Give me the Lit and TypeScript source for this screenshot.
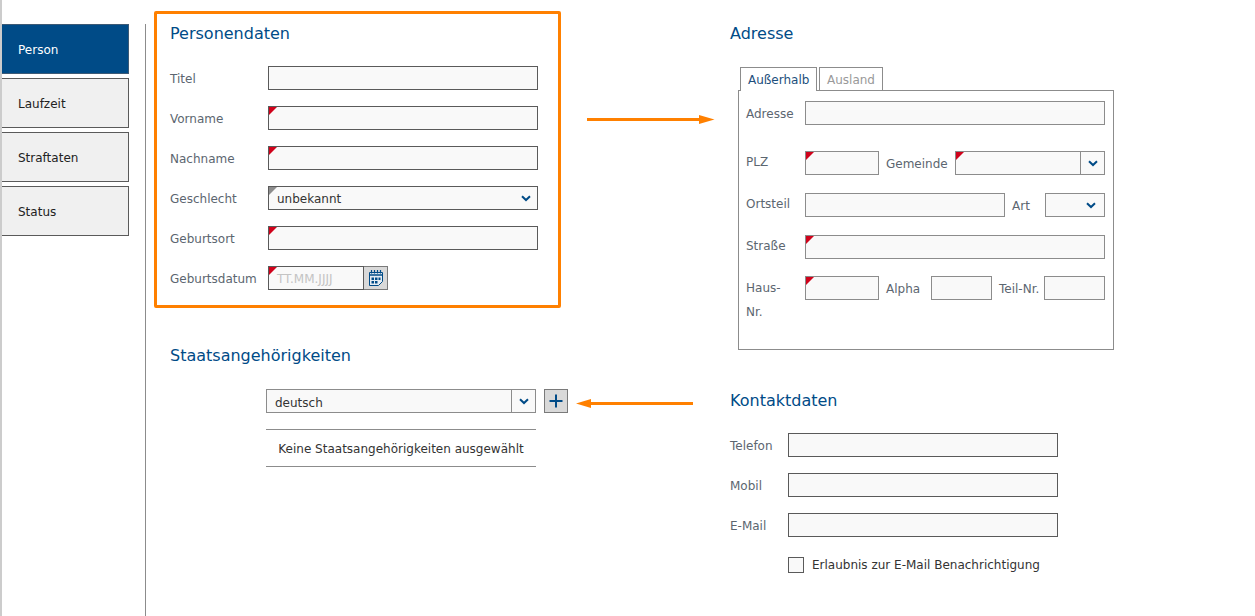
import { LitElement, html, css } from "lit";
import { customElement } from "lit/decorators.js";

const chevron = html`<svg class="chev" width="10" height="7" viewBox="0 0 10 7"><path d="M1 1.2 L5 5 L9 1.2" fill="none" stroke="#004b87" stroke-width="2"/></svg>`;

@customElement("app-root")
export class AppRoot extends LitElement {
  static styles = css`
    :host { display: block; width: 1255px; height: 616px; position: relative; overflow: hidden; background: #fff;
      font-family: "DejaVu Sans", sans-serif; font-size: 12px; color: #333; }
    * { box-sizing: border-box; }
    .page { display: flex; height: 616px; }
    .strip { width: 2px; background: #ccc; flex: none; }
    .side { width: 127px; flex: none; padding-top: 24px; display: flex; flex-direction: column; gap: 4px; }
    .tab { height: 50px; border: 1px solid #5a5a5a; border-left: 0; background: #f0f0f0; color: #222; padding: 2px 0 0 16px;
      display: flex; align-items: center; }
    .tab.on { background: #004b87; color: #fff; border-color: #3d5a75; }
    .rule { width: 1px; background: #8c8c8c; margin: 24px 0 0 16px; flex: none; }
    .left { width: 407px; margin-left: 8px; flex: none; padding-top: 11px; }
    .right { width: 384px; margin-left: 169px; flex: none; }
    h2 { margin: 0; font-size: 16px; font-weight: 400; color: #004b87; line-height: 20px; }
    .box { height: 297px; border: 3px solid #ff8000; border-radius: 2px; padding: 10px 13px 0; }
    .box h2 { margin-bottom: 22px; }
    .row { display: flex; align-items: flex-start; height: 24px; margin-bottom: 16px; }
    .lbl { color: #5c6670; flex: none; line-height: 26px; height: 24px; }
    .box .lbl { width: 98px; }
    .in { height: 24px; border: 1px solid #5a5a5a; background: #f9f9f9; position: relative; flex: none;
      display: flex; align-items: center; color: #333; }
    .w270 { width: 270px; }
    .req::before { content: ""; position: absolute; left: 0; top: 0; border-style: solid; border-width: 8px 8px 0 0;
      border-color: #d0021b transparent transparent transparent; }
    .req.grey::before { border-top-color: #8c8c8c; }
    .val { padding: 2px 0 0 8px; }
    .sel { justify-content: space-between; padding-right: 6px; }
    .sel.art-sel { padding-right: 8px; }
    .ph { color: #c4c4c4; padding: 2px 0 0 8px; }
    .date { width: 96px; }
    .cal { width: 24px; height: 24px; border: 1px solid #7a7a7a; border-left: 0; background: #d9d9d9; display: flex;
      align-items: center; justify-content: center; flex: none; }
    .staat { padding: 0 0 0 16px; margin-top: 38px; }
    .combo { margin: 23px 0 0 112px; display: flex; gap: 8px; }
    .lt { border-color: #8c8c8c; }
    .grow { flex: 1; }
    .combo .val { padding-top: 4px; }
    .drop { width: 24px; height: 22px; border-left: 1px solid #8c8c8c; display: flex; align-items: center; justify-content: center; flex: none; }
    .plus { width: 24px; height: 24px; border: 1px solid #7a7a7a; background: #d9d9d9; display: flex; align-items: center; justify-content: center; flex: none; }
    .list { margin: 16px 0 0 112px; width: 270px; height: 38px; padding-top: 2px; border-top: 1px solid #8c8c8c; border-bottom: 1px solid #8c8c8c;
      display: flex; align-items: center; justify-content: center; color: #333; }
    .right > h2 { margin-top: 24px; }
    .tabs { display: flex; gap: 2px; margin: 23px 0 0 10px; height: 23px; position: relative; z-index: 1; }
    .t { height: 23px; border: 1px solid #8c8c8c; border-bottom: 0; padding: 2px 7px 0; display: flex; align-items: center; color: #999; background: #fff; }
    .t.on { height: 24px; padding-top: 1px; color: #1d4f7c; width: 77px; }
    .t.off { width: 64px; }
    .frame { width: 376px; height: 260px; margin: 0 0 0 8px; border: 1px solid #8c8c8c; padding: 10px 8px 0 7px; }
    .fr { display: flex; height: 24px; }
    .fr > .flbl { width: 59px; flex: none; color: #5c6670; line-height: 24px; }
    .fr .mid { color: #5c6670; flex: none; padding-top: 1px; display: flex; align-items: center; height: 24px; }
    .fr.up > .flbl { margin-top: -1px; }
    .fr.first > .flbl { margin-top: 1px; }
    .fr.haus > .flbl { margin-top: 0; }
    .grow2 { width: 300px; }
    .w74 { width: 74px; }
    .w150 { width: 150px; }
    .w200 { width: 200px; }
    .w60 { width: 60px; }
    .w61 { width: 61px; }
    .ml7 { margin-left: 7px; }
    .gem { width: 69px; }
    .art { width: 33px; }
    .alpha { width: 45px; }
    .teil { width: 45px; }
    .m26 { margin-top: 26px; }
    .m18 { margin-top: 18px; }
    .m17 { margin-top: 17px; }
    .right > h2.kh { margin-top: 41px; }
    .kontakt { margin-top: 22px; }
    .kontakt .lbl { width: 58px; }
    .check { display: flex; align-items: center; margin: 20px 0 0 58px; height: 16px; gap: 8px; color: #333; }
    .cb { width: 16px; height: 16px; border: 1px solid #5a5a5a; background: #f9f9f9; flex: none; }
    .arrows { position: absolute; inset: 0; pointer-events: none; }
  `;

  private calIcon() {
    return html`<svg width="14" height="16" viewBox="0 0 14 16">
      <path d="M0.5 2.5 H13.5 V11.5 L9.5 15.5 H0.5 Z" fill="#e4ecf3" stroke="#004b87" stroke-width="1"/>
      <path d="M0.5 5 H13.5" stroke="#004b87" stroke-width="1.5"/>
      <path d="M2.5 0 V3.5 M5.5 0 V3.5 M8.5 0 V3.5 M11.5 0 V3.5" stroke="#004b87" stroke-width="1.2"/>
      <rect x="2.5" y="7.5" width="2.5" height="2.5" fill="#004b87"/><rect x="6" y="7.5" width="2.5" height="2.5" fill="#004b87"/><rect x="9.5" y="7.5" width="2" height="2.5" fill="#004b87"/>
      <rect x="2.5" y="11" width="2.5" height="2.5" fill="#004b87"/><rect x="6" y="11" width="2.5" height="2.5" fill="#004b87"/>
    </svg>`;
  }

  render() {
    return html`
      <div class="page">
        <div class="strip"></div>
        <nav class="side">
          <div class="tab on">Person</div>
          <div class="tab">Laufzeit</div>
          <div class="tab">Straftaten</div>
          <div class="tab">Status</div>
        </nav>
        <div class="rule"></div>
        <div class="left">
          <section class="box">
            <h2>Personendaten</h2>
            <div class="row"><span class="lbl">Titel</span><div class="in w270"></div></div>
            <div class="row"><span class="lbl">Vorname</span><div class="in w270 req"></div></div>
            <div class="row"><span class="lbl">Nachname</span><div class="in w270 req"></div></div>
            <div class="row"><span class="lbl">Geschlecht</span><div class="in w270 req grey sel"><span class="val">unbekannt</span>${chevron}</div></div>
            <div class="row"><span class="lbl">Geburtsort</span><div class="in w270 req"></div></div>
            <div class="row"><span class="lbl">Geburtsdatum</span><div class="in date req"><span class="ph">TT.MM.JJJJ</span></div><div class="cal">${this.calIcon()}</div></div>
          </section>
          <section class="staat">
            <h2>Staatsangehörigkeiten</h2>
          </section>
          <div class="combo">
            <div class="in lt w270"><span class="val grow">deutsch</span><div class="drop">${chevron}</div></div>
            <div class="plus"><svg width="14" height="14" viewBox="0 0 14 14"><path d="M7 0.5 V13.5 M0.5 7 H13.5" stroke="#004b87" stroke-width="2"/></svg></div>
          </div>
          <div class="list">Keine Staatsangehörigkeiten ausgewählt</div>
        </div>
        <div class="right">
          <h2>Adresse</h2>
          <div class="tabs"><div class="t on">Außerhalb</div><div class="t off">Ausland</div></div>
          <div class="frame">
            <div class="fr first"><span class="flbl">Adresse</span><div class="in lt grow2"></div></div>
            <div class="fr m26 up"><span class="flbl">PLZ</span><div class="in lt w74 req"></div>
              <span class="mid ml7 gem">Gemeinde</span>
              <div class="in lt w150 req"><span class="grow"></span><div class="drop">${chevron}</div></div></div>
            <div class="fr m18 up"><span class="flbl">Ortsteil</span><div class="in lt w200"></div>
              <span class="mid ml7 art">Art</span>
              <div class="in lt w60 sel art-sel"><span></span>${chevron}</div></div>
            <div class="fr m18 up"><span class="flbl">Straße</span><div class="in lt grow2 req"></div></div>
            <div class="fr m17 up haus"><span class="flbl">Haus-<br />Nr.</span><div class="in lt w74 req"></div>
              <span class="mid ml7 alpha">Alpha</span>
              <div class="in lt w61"></div>
              <span class="mid ml7 teil">Teil-Nr.</span>
              <div class="in lt w61"></div></div>
          </div>
          <h2 class="kh">Kontaktdaten</h2>
          <div class="kontakt">
            <div class="row"><span class="lbl">Telefon</span><div class="in w270"></div></div>
            <div class="row"><span class="lbl">Mobil</span><div class="in w270"></div></div>
            <div class="row"><span class="lbl">E-Mail</span><div class="in w270"></div></div>
            <div class="check"><span class="cb"></span><span>Erlaubnis zur E-Mail Benachrichtigung</span></div>
          </div>
        </div>
      </div>
      <svg class="arrows" width="1255" height="616" viewBox="0 0 1255 616">
        <path d="M587 119.5 H702" stroke="#ff8000" stroke-width="3"/>
        <path d="M699 115 L714.5 119.5 L699 124 Z" fill="#ff8000"/>
        <path d="M693 403.5 H590" stroke="#ff8000" stroke-width="3"/>
        <path d="M591 399 L576 403.5 L591 408 Z" fill="#ff8000"/>
      </svg>
    `;
  }
}
